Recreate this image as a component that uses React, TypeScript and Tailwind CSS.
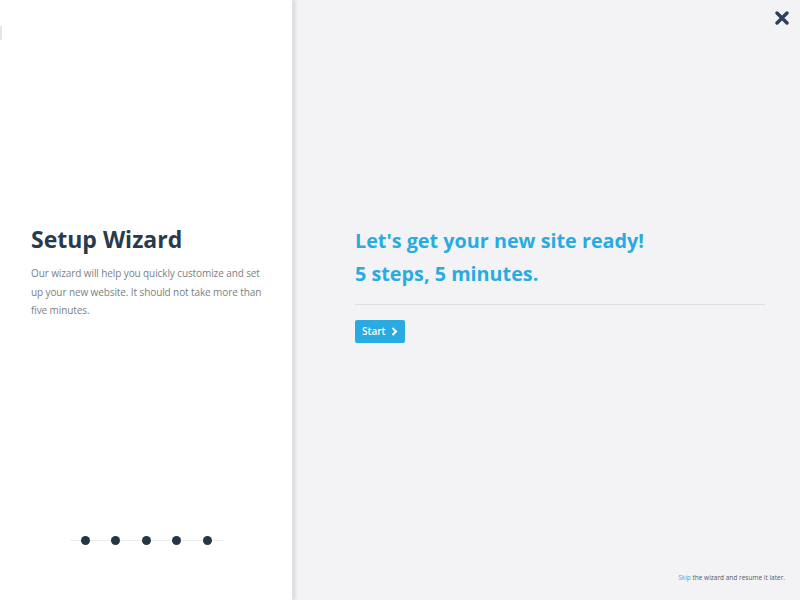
import React from "react";

export default function App() {
  return (
    <div
      className="flex w-[800px] h-[600px] bg-[#f3f3f5] overflow-hidden"
      style={{ fontFamily: '"Open Sans", "Liberation Sans", sans-serif' }}
    >
      <aside className="relative w-[293px] h-full bg-white flex flex-col shadow-[2px_0_4px_rgba(0,0,0,0.12)] z-10 border-r border-[#e2e2e4]">
        <div className="absolute left-0 top-[26px] w-[2px] h-[14px] bg-[#e6e6e6]" />
        <div className="flex-1 flex flex-col justify-center pl-[31px] pr-[20px] pt-[32px]">
          <h1 className="text-[23px] leading-[30px] font-bold text-[#283a4e]">Setup Wizard</h1>
          <p className="mt-[10px] text-[10px] tracking-[-0.1px] leading-[18.5px] text-[#7b7f86]">
            Our wizard will help you quickly customize and set up your new website. It should not take more than five minutes.
          </p>
        </div>
        <div className="relative h-[88px] flex justify-center">
          <div className="relative mt-[24px] h-[10px] w-[153px]">
            <div className="absolute left-0 right-0 top-[4px] h-[1px] bg-[#ececee]" />
            <div className="relative flex justify-between px-[11px]">
              {[0, 1, 2, 3, 4].map((i) => (
                <span key={i} className="block w-[9px] h-[9px] rounded-full bg-[#253647]" />
              ))}
            </div>
          </div>
        </div>
      </aside>
      <main className="relative flex-1 flex flex-col">
        <button className="absolute right-[11px] top-[11px] text-[#2c4058]" aria-label="close">
          <svg width="14" height="14" viewBox="0 0 14 14">
            <path d="M2 2 L12 12 M12 2 L2 12" stroke="currentColor" strokeWidth="3.4" strokeLinecap="round" />
          </svg>
        </button>
        <div className="flex-1 flex flex-col justify-center pl-[62px] pr-[35px] pb-[33px]">
          <h2 className="text-[19.8px] leading-[33px] font-bold text-[#29abe2]">Let's get your new site ready!</h2>
          <h2 className="text-[19.8px] leading-[33px] font-bold text-[#29abe2]">5 steps, 5 minutes.</h2>
          <div className="mt-[14px] h-[1px] bg-[#dfdfe2]" />
          <div className="mt-[12px]">
            <button className="inline-flex items-center gap-[5px] h-[23px] px-[7px] rounded-[2px] bg-[#29abe2] text-white text-[10px] font-semibold">
              Start
              <svg width="7" height="9" viewBox="0 0 7 9">
                <path d="M1.5 1 L5 4.5 L1.5 8" stroke="white" strokeWidth="2" fill="none" />
              </svg>
            </button>
          </div>
        </div>
        <div className="absolute right-[15px] bottom-[17px] text-[6.5px] text-[#55595f]">
          <span className="text-[#4aa8dd]">Skip</span> the wizard and resume it later.
        </div>
      </main>
    </div>
  );
}
